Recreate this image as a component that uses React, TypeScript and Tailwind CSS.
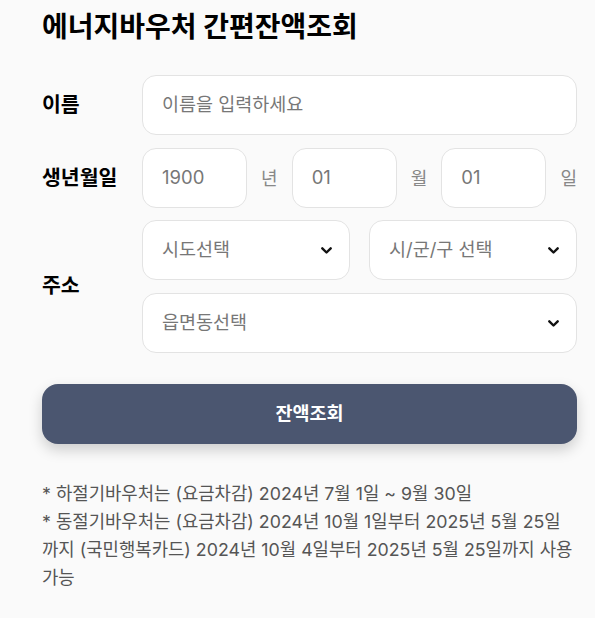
import React from "react";

const font = { fontFamily: '"Inter", "Noto Sans CJK KR", sans-serif' };

function Chevron() {
  return (
    <svg width="11" height="7" viewBox="0 0 11 7" fill="none">
      <path d="M1.3 1.3l4.2 4.2 4.2-4.2" stroke="#111" strokeWidth="2.4" strokeLinecap="round" strokeLinejoin="round" />
    </svg>
  );
}

function Select({ label, className = "" }: { label: string; className?: string }) {
  return (
    <div className={`h-[60px] shrink-0 bg-white border border-[#e3e3e3] rounded-[14px] flex items-center justify-between pl-[19px] pr-[17px] ${className}`}>
      <span className="text-[18.5px] text-[#777]">{label}</span>
      <Chevron />
    </div>
  );
}

function Box({ value, className = "" }: { value: string; className?: string }) {
  return (
    <div className={`h-[60px] min-w-0 bg-white border border-[#e3e3e3] rounded-[14px] flex items-center pl-[19px] text-[18.5px] text-[#777] ${className}`}>
      {value}
    </div>
  );
}

export default function App() {
  return (
    <div className="w-full min-h-[618px] bg-[#fafafa] pl-[42px] pr-[18px]" style={font}>
      <h1 className="h-[54px] leading-[54px] text-[28px] font-bold text-black mb-[21px]">
        에너지바우처 간편잔액조회
      </h1>

      <div className="flex items-center">
        <div className="w-[100px] text-[20.5px] font-bold text-black">이름</div>
        <Box value="이름을 입력하세요" className="flex-1" />
      </div>

      <div className="flex items-center mt-[13px]">
        <div className="w-[100px] text-[20.5px] font-bold text-black">생년월일</div>
        <div className="flex-1 flex items-center gap-[14px]">
          <Box value="1900" className="flex-1" />
          <span className="text-[18px] text-[#888]">년</span>
          <Box value="01" className="flex-1" />
          <span className="text-[18px] text-[#888]">월</span>
          <Box value="01" className="flex-1" />
          <span className="text-[18px] text-[#888]">일</span>
        </div>
      </div>

      <div className="flex items-center mt-[12px]">
        <div className="w-[100px] text-[20.5px] font-bold text-black">주소</div>
        <div className="flex-1 flex flex-col gap-[13px]">
          <div className="flex gap-[19px]">
            <Select label="시도선택" className="flex-1" />
            <Select label="시/군/구 선택" className="flex-1" />
          </div>
          <Select label="읍면동선택" />
        </div>
      </div>

      <button className="mt-[31px] w-full h-[60px] rounded-[16px] bg-[#4b5670] text-white text-[18.5px] font-bold shadow-[0_6px_14px_rgba(0,0,0,0.18)]">
        잔액조회
      </button>

      <div className="mt-[36px] text-[17.8px] leading-[28px] text-[#555]">
        <p>* 하절기바우처는 (요금차감) 2024년 7월 1일 ~ 9월 30일</p>
        <p>* 동절기바우처는 (요금차감) 2024년 10월 1일부터 2025년 5월 25일까지 (국민행복카드) 2024년 10월 4일부터 2025년 5월 25일까지 사용가능</p>
      </div>
    </div>
  );
}
